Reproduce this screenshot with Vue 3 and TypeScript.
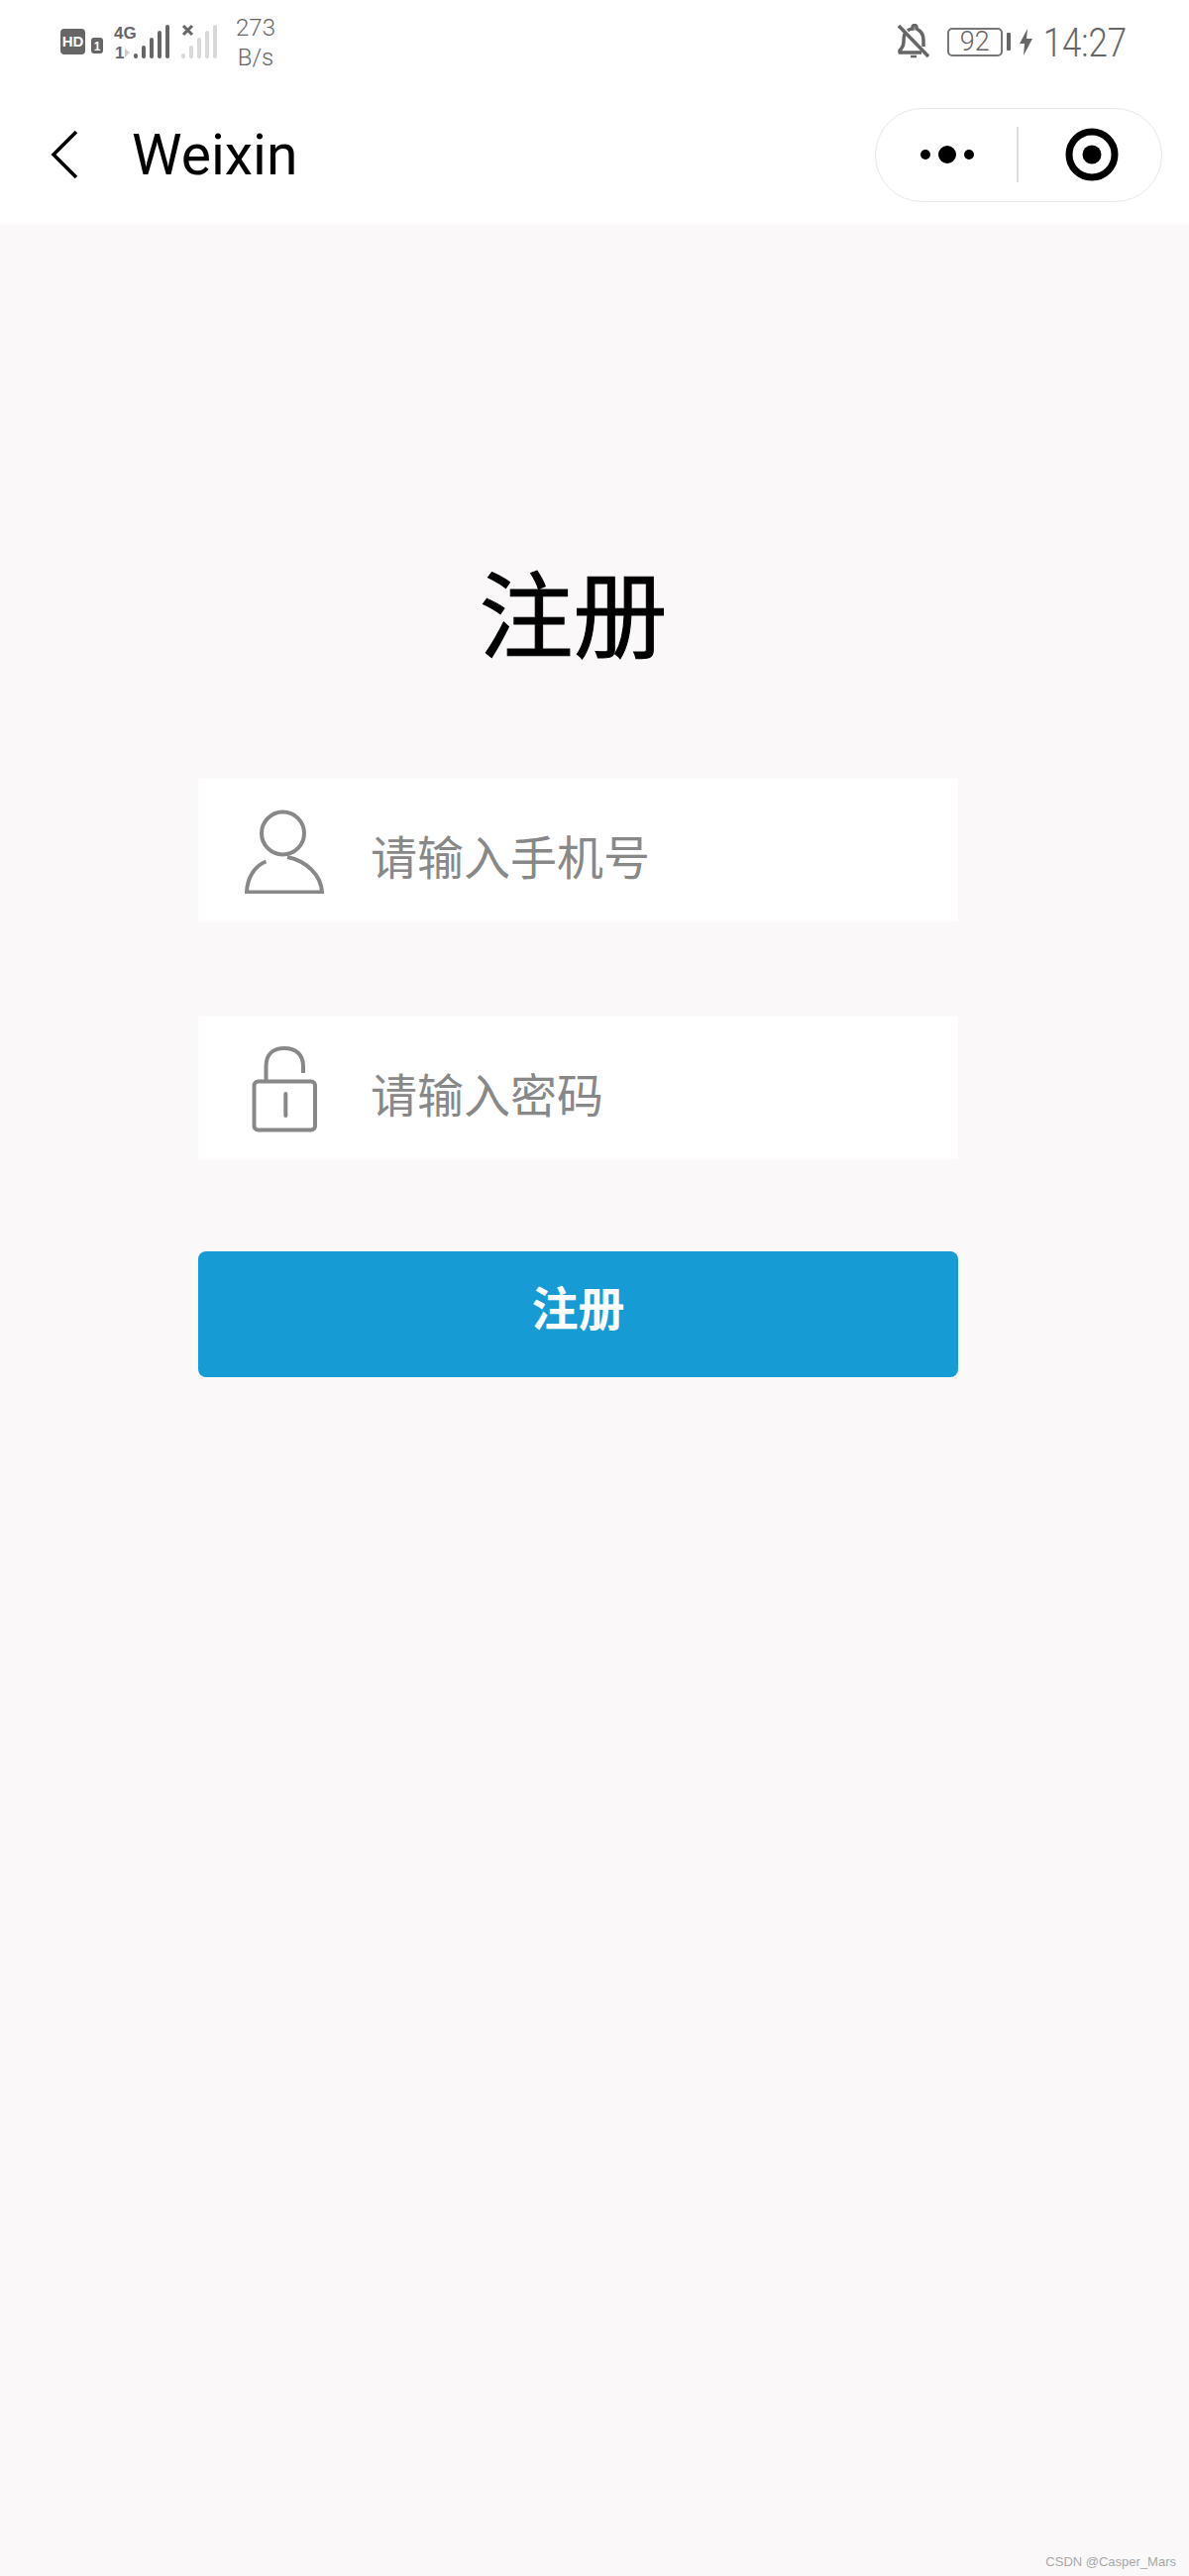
<script setup lang="ts">
const fields = [
  { key: 'phone', placeholder: '请输入手机号' },
  { key: 'password', placeholder: '请输入密码' },
]

const signalBars = [
  { x: 0, h: 5 },
  { x: 8, h: 13 },
  { x: 16, h: 21 },
  { x: 24, h: 28 },
  { x: 32, h: 34 },
]
</script>

<template>
  <div class="page">
    <header class="header">
      <div class="status-bar">
        <div class="status-left">
          <svg class="sim-icon" width="43" height="26" viewBox="0 0 43 26">
            <rect width="25" height="26" rx="4" fill="#666" />
            <text x="12.5" y="18" class="hd-text" text-anchor="middle">HD</text>
            <rect x="31" y="9" width="12" height="16" rx="3" fill="#666" />
            <text x="37" y="22" class="sim-text" text-anchor="middle">1</text>
          </svg>
          <svg class="signal-one" width="56" height="36" viewBox="0 0 56 36">
            <text x="0" y="15" class="net-text">4G</text>
            <text x="1" y="35" class="net-text">1</text>
            <path d="M11 25 L16 29 L11 34 Z" fill="#ccc" />
            <rect v-for="bar in signalBars" :key="bar.x" :x="20 + bar.x" :y="35 - bar.h" width="4" :height="bar.h" rx="2" fill="#666" />
          </svg>
          <svg class="signal-two" width="37" height="36" viewBox="0 0 37 36">
            <path d="M2 2 L11 11 M11 2 L2 11" stroke="#666" stroke-width="3" />
            <rect v-for="bar in signalBars" :key="bar.x" :x="bar.x" :y="35 - bar.h" width="4" :height="bar.h" rx="2" fill="#d8d8d8" />
          </svg>
          <div class="speed">
            <span>273</span>
            <span>B/s</span>
          </div>
        </div>
        <div class="status-right">
          <svg class="bell" width="32" height="36" viewBox="0 0 32 36" fill="none" stroke="#666">
            <path d="M7 10 C6 13 6 15 6 18 C6 22 4 25 2 27 V29 H24" stroke-width="3.5" stroke-linejoin="round" />
            <path d="M10 7 C12 5 14 5 15 5 V3 C16 1 18 1 19 3 V5 C23 7 26 10 26 16 V23" stroke-width="3.5" />
            <path d="M1 2 L31 33" stroke-width="3.5" />
            <path d="M13 33 H19" stroke-width="2.5" />
          </svg>
          <div class="battery">92</div>
          <span class="battery-nub"></span>
          <svg class="bolt" width="13" height="27" viewBox="0 0 13 27">
            <path d="M8 0 L0 15 H5 L4 27 L13 10 H7 Z" fill="#666" />
          </svg>
          <span class="time">14:27</span>
        </div>
      </div>
      <div class="nav-bar">
        <svg class="back" width="28" height="50" viewBox="0 0 28 50" fill="none">
          <path d="M26 2 L3 25 L26 48" stroke="#000" stroke-width="3.6" />
        </svg>
        <span class="nav-title">Weixin</span>
        <div class="capsule">
          <div class="capsule-side capsule-more">
            <i class="dot"></i>
            <i class="dot dot-big"></i>
            <i class="dot"></i>
          </div>
          <span class="capsule-line"></span>
          <div class="capsule-side capsule-target">
            <svg width="54" height="54" viewBox="0 0 54 54">
              <circle cx="27" cy="27" r="23" fill="none" stroke="#000" stroke-width="7" />
              <circle cx="27" cy="27" r="9.5" fill="#000" />
            </svg>
          </div>
        </div>
      </div>
    </header>

    <main class="main">
      <div class="form">
        <h1 class="title">注册</h1>
        <div v-for="field in fields" :key="field.key" class="field">
          <div class="field-icon">
            <svg v-if="field.key === 'phone'" width="80" height="85" viewBox="0 0 80 85" fill="none" stroke="#888" stroke-width="4">
              <circle cx="38.5" cy="24" r="21.5" />
              <path d="M21.5 52.5 C10 57 2.5 69 2 83.5 H78 C77 66 62 52 43 48" />
            </svg>
            <svg v-else width="66" height="87" viewBox="0 0 66 87" fill="none" stroke="#888" stroke-width="4">
              <rect x="2.5" y="35.5" width="61.5" height="49" rx="4" />
              <path d="M14.5 34 V20 C14.5 8 22 2 33 2 C44 2 52 8 52 20 V27" />
              <path d="M34.3 48 V70" stroke-linecap="round" />
            </svg>
          </div>
          <span class="field-text">{{ field.placeholder }}</span>
        </div>
        <button class="submit" type="button">注册</button>
      </div>
    </main>

    <span class="watermark">CSDN @Casper_Mars</span>
  </div>
</template>

<style scoped>
.page {
  position: relative;
  width: 1200px;
  height: 2600px;
  background: #faf8f9;
  font-family: Roboto, "Noto Sans CJK SC", sans-serif;
  overflow: hidden;
}

.header {
  background: #fff;
}

.status-bar {
  height: 86px;
  display: flex;
  justify-content: space-between;
  align-items: center;
  padding: 0 63px 2px 61px;
  box-sizing: border-box;
  color: #666;
}

.status-left,
.status-right {
  display: flex;
  align-items: center;
}

.status-left svg {
  overflow: visible;
}

.sim-icon {
  margin-right: 11px;
}

.signal-one {
  margin-right: 12px;
}

.signal-two {
  margin-right: 18px;
}

.hd-text {
  font: 700 15px "Liberation Sans", sans-serif;
  fill: #fff;
}

.sim-text {
  font: 700 12px "Liberation Sans", sans-serif;
  fill: #fff;
}

.net-text {
  font: 700 17px "Liberation Sans", sans-serif;
  fill: #666;
}

.speed {
  display: flex;
  flex-direction: column;
  align-items: center;
  padding-top: 2px;
  font-size: 24px;
  font-weight: 300;
  line-height: 30px;
}

.bell {
  margin-right: 18px;
  margin-left: 2px;
}

.battery {
  width: 56px;
  height: 29px;
  box-sizing: border-box;
  border: 2px solid #777;
  border-radius: 5px;
  text-align: center;
  font-size: 27px;
  font-weight: 300;
  line-height: 25px;
}

.battery-nub {
  width: 4px;
  height: 18px;
  margin: 0 9px 0 4px;
  border-radius: 1px;
  background: #666;
}

.bolt {
  margin-right: 11px;
}

/* the clock in the reference is narrower than Roboto */
.time {
  margin-left: -13px;
  padding-top: 3px;
  font-size: 40px;
  font-weight: 300;
  line-height: 40px;
  transform: scaleX(0.87);
  transform-origin: right center;
}

.nav-bar {
  height: 140px;
  display: flex;
  align-items: center;
  padding: 0 27px 0 51px;
}

.nav-title {
  margin-left: 54px;
  font-size: 57px;
  color: #000;
}

.capsule {
  margin-left: auto;
  width: 290px;
  height: 95px;
  box-sizing: border-box;
  display: flex;
  align-items: center;
  border: 1.5px solid #e8e8e8;
  border-radius: 48px;
}

.capsule-side {
  flex: 1;
  display: flex;
  justify-content: center;
  align-items: center;
}

.capsule-more {
  gap: 8px;
  padding-left: 2px;
}

.capsule-target {
  padding-left: 4px;
}

.capsule-line {
  width: 1.5px;
  height: 56px;
  background: #ddd;
}

.dot {
  width: 10px;
  height: 10px;
  border-radius: 50%;
  background: #000;
}

.dot-big {
  width: 18px;
  height: 18px;
}

.main {
  padding: 336px 0 0 200px;
}

.form {
  width: 767px;
}

.title {
  margin: 0 0 104px;
  padding: 3px 10px 0 0;
  height: 117px;
  text-align: center;
  font-size: 95px;
  font-weight: 400;
  -webkit-text-stroke: 1px #000;
  line-height: 120px;
  color: #000;
}

.field {
  height: 144px;
  margin-bottom: 96px;
  display: flex;
  align-items: center;
  padding-left: 47px;
  gap: 47px;
  background: #fff;
}

.field-icon {
  width: 80px;
  display: flex;
  justify-content: center;
  padding-top: 2px;
}

.field-icon svg {
  display: block;
}

.field-text {
  padding-top: 9px;
  font-size: 47px;
  color: #888;
}

.submit {
  display: block;
  width: 100%;
  height: 127px;
  margin-top: -3px;
  padding: 0 0 18px;
  border: none;
  border-radius: 8px;
  background: #169bd5;
  color: #fff;
  font-family: inherit;
  font-size: 47px;
  font-weight: 700;
}

.watermark {
  position: absolute;
  right: 13px;
  bottom: 7px;
  font-family: "Liberation Sans", sans-serif;
  font-size: 13px;
  color: #a8a8a8;
}
</style>
